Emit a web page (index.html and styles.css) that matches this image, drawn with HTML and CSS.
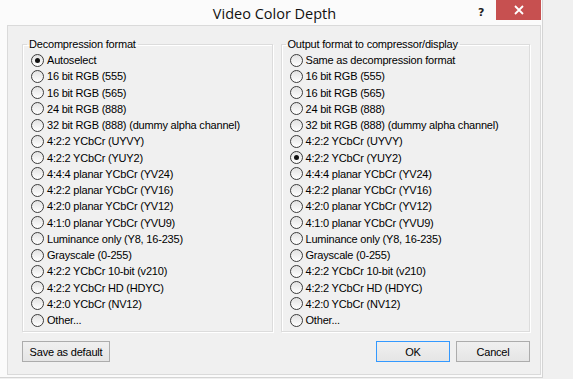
FILE: index.html
```html
<!DOCTYPE html>
<html>
<head>
<meta charset="utf-8">
<link rel="stylesheet" href="styles.css">
</head>
<body>
<div class="window">
  <div class="titlebar">
    <span class="title">Video Color Depth</span>
    <span class="help">?</span>
    <span class="close"><svg width="10" height="10" viewBox="0 0 10 10"><path d="M1 1L9 9M9 1L1 9" stroke="#fff" stroke-width="1.8" fill="none"/></svg></span>
  </div>
  <div class="client">
    <div class="groups">
      <fieldset class="group">
        <legend>Decompression format</legend>
        <div class="row"><span class="radio checked"></span>Autoselect</div>
        <div class="row"><span class="radio"></span>16 bit RGB (555)</div>
        <div class="row"><span class="radio"></span>16 bit RGB (565)</div>
        <div class="row"><span class="radio"></span>24 bit RGB (888)</div>
        <div class="row"><span class="radio"></span>32 bit RGB (888) (dummy alpha channel)</div>
        <div class="row"><span class="radio"></span>4:2:2 YCbCr (UYVY)</div>
        <div class="row"><span class="radio"></span>4:2:2 YCbCr (YUY2)</div>
        <div class="row"><span class="radio"></span>4:4:4 planar YCbCr (YV24)</div>
        <div class="row"><span class="radio"></span>4:2:2 planar YCbCr (YV16)</div>
        <div class="row"><span class="radio"></span>4:2:0 planar YCbCr (YV12)</div>
        <div class="row"><span class="radio"></span>4:1:0 planar YCbCr (YVU9)</div>
        <div class="row"><span class="radio"></span>Luminance only (Y8, 16-235)</div>
        <div class="row"><span class="radio"></span>Grayscale (0-255)</div>
        <div class="row"><span class="radio"></span>4:2:2 YCbCr 10-bit (v210)</div>
        <div class="row"><span class="radio"></span>4:2:2 YCbCr HD (HDYC)</div>
        <div class="row"><span class="radio"></span>4:2:0 YCbCr (NV12)</div>
        <div class="row"><span class="radio"></span>Other...</div>
      </fieldset>
      <fieldset class="group">
        <legend>Output format to compressor/display</legend>
        <div class="row"><span class="radio"></span>Same as decompression format</div>
        <div class="row"><span class="radio"></span>16 bit RGB (555)</div>
        <div class="row"><span class="radio"></span>16 bit RGB (565)</div>
        <div class="row"><span class="radio"></span>24 bit RGB (888)</div>
        <div class="row"><span class="radio"></span>32 bit RGB (888) (dummy alpha channel)</div>
        <div class="row"><span class="radio"></span>4:2:2 YCbCr (UYVY)</div>
        <div class="row"><span class="radio checked"></span>4:2:2 YCbCr (YUY2)</div>
        <div class="row"><span class="radio"></span>4:4:4 planar YCbCr (YV24)</div>
        <div class="row"><span class="radio"></span>4:2:2 planar YCbCr (YV16)</div>
        <div class="row"><span class="radio"></span>4:2:0 planar YCbCr (YV12)</div>
        <div class="row"><span class="radio"></span>4:1:0 planar YCbCr (YVU9)</div>
        <div class="row"><span class="radio"></span>Luminance only (Y8, 16-235)</div>
        <div class="row"><span class="radio"></span>Grayscale (0-255)</div>
        <div class="row"><span class="radio"></span>4:2:2 YCbCr 10-bit (v210)</div>
        <div class="row"><span class="radio"></span>4:2:2 YCbCr HD (HDYC)</div>
        <div class="row"><span class="radio"></span>4:2:0 YCbCr (NV12)</div>
        <div class="row"><span class="radio"></span>Other...</div>
      </fieldset>
    </div>
    <div class="buttons">
      <button class="btn btn-save">Save as default</button>
      <span class="spacer"></span>
      <button class="btn btn-ok">OK</button>
      <button class="btn btn-cancel">Cancel</button>
    </div>
  </div>
</div>
</body>
</html>
```

FILE: styles.css
```css
html, body {
  margin: 0;
  padding: 0;
}
body {
  background: #f0f0f0;
  width: 573px;
  height: 379px;
  overflow: hidden;
  font-family: "Liberation Sans", Arial, sans-serif;
  font-size: 11px;
  color: #000;
}
.window {
  box-sizing: border-box;
  width: 543px;
  height: 378px;
  background: #fbfbfb;
  border-right: 1px solid #d4d4d4;
  border-bottom: 1px solid #d4d4d4;
  padding: 0 1px 2px 7px;
  display: flex;
  flex-direction: column;
}
.titlebar {
  height: 25px;
  margin-left: -7px;
  display: flex;
  align-items: flex-start;
}
.title {
  flex: 1;
  text-align: center;
  font-family: "Open Sans", "Noto Sans", sans-serif;
  font-size: 14.5px;
  line-height: 28px;
  padding-left: 71px;
  color: #111;
}
.help {
  width: 7px;
  font-family: "DejaVu Sans", sans-serif;
  font-weight: bold;
  font-size: 11px;
  line-height: 26px;
  margin-right: 11px;
  color: #222;
}
.close {
  width: 45px;
  height: 20px;
  background: #c75050;
  display: flex;
  align-items: center;
  justify-content: center;
}
.client {
  flex: 1;
  background: #f0f0f0;
  border: 1px solid #dadada;
  display: flex;
  flex-direction: column;
}
.groups {
  display: flex;
  padding: 12px 10px 0 14px;
  gap: 8px;
}
.group {
  margin: 0;
  border: 1px solid #dcdcdc;
  box-shadow: inset 1px 1px 0 #fff, 1px 1px 0 #fff;
  padding: 2px 0 3px 7px;
  min-width: 0;
  box-sizing: border-box;
}
.group:first-child { width: 251px; }
.group:last-child { width: 250px; }
.group legend {
  line-height: 12px;
  padding: 0 2px;
  margin-left: -3px;
  letter-spacing: -0.2px;
}
.row {
  height: 16.25px;
  display: flex;
  align-items: center;
  white-space: nowrap;
  letter-spacing: -0.2px;
}
.radio {
  box-sizing: border-box;
  width: 13px;
  height: 13px;
  border-radius: 50%;
  border: 1px solid #3c3c3c;
  background: linear-gradient(#e2e2e2, #ffffff);
  margin: 0 3px 0 1px;
  flex: none;
  display: flex;
  align-items: center;
  justify-content: center;
}
.radio.checked::after {
  content: "";
  width: 5px;
  height: 5px;
  border-radius: 50%;
  background: #111;
}
.buttons {
  display: flex;
  padding: 9px 10px 0 14px;
  gap: 6px;
}
.spacer { flex: 1; }
.btn {
  box-sizing: border-box;
  height: 21px;
  border: 1px solid #acacac;
  background: linear-gradient(#f0f0f0, #e5e5e5);
  font-family: "Liberation Sans", Arial, sans-serif;
  font-size: 11px;
  color: #000;
  padding: 0;
  margin: 0;
  letter-spacing: -0.2px;
}
.btn-save { width: 88px; }
.btn-ok { width: 74px; border-color: #3399ff; }
.btn-cancel { width: 74px; }
```
